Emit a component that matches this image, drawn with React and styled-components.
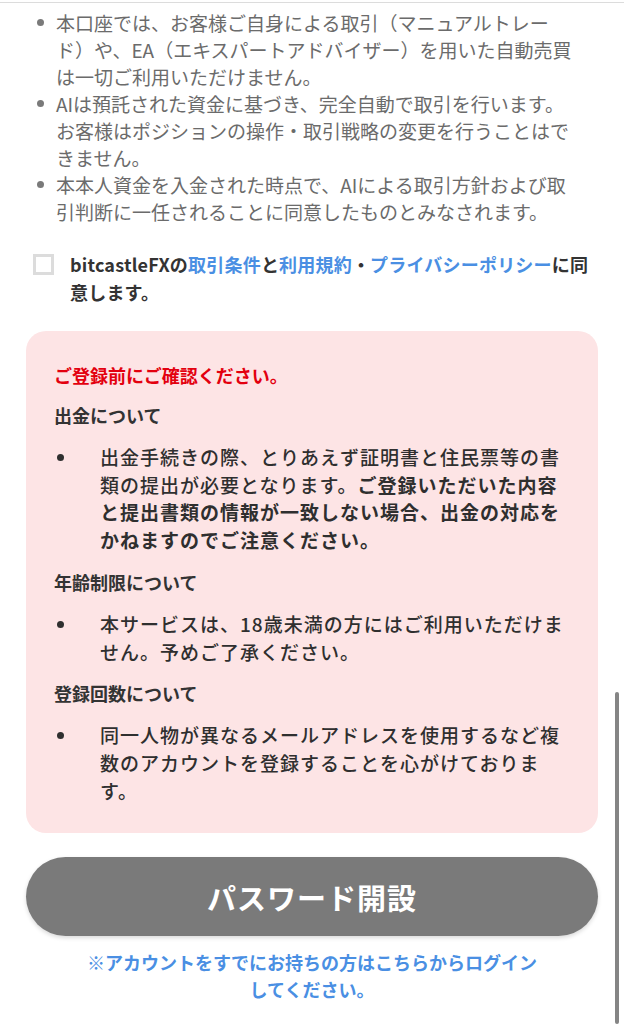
import React from "react";
import styled, { createGlobalStyle } from "styled-components";

const Global = createGlobalStyle`
  html, body { margin: 0; padding: 0; background: #fff; }
  body { font-family: "Noto Sans CJK JP", "Noto Sans", sans-serif; -webkit-font-smoothing: antialiased; }
  * { box-sizing: border-box; }
`;

const Page = styled.div`
  position: relative;
  width: 624px;
  height: 1022px;
  overflow: hidden;
  border-top: 1px solid #dcdcdc;
  margin-top: 2px;
`;

const Content = styled.div`
  padding: 0 26px;
  display: flex;
  flex-direction: column;
`;

const NoteList = styled.ul`
  list-style: none;
  margin: 6px 22px 0 0;
  padding: 0 0 0 30px;
  color: #6b6b6b;
  font-size: 19px;
  line-height: 27px;
`;

const NoteItem = styled.li`
  position: relative;
  &::before {
    content: "";
    position: absolute;
    left: -19px;
    top: 10px;
    width: 7px;
    height: 7px;
    border-radius: 50%;
    background: #7a7a7a;
  }
`;

const AgreeRow = styled.label`
  display: flex;
  gap: 16px;
  margin-top: 25px;
  padding-left: 7px;
  align-items: flex-start;
`;

const Check = styled.span`
  flex: none;
  width: 21px;
  height: 21px;
  margin-top: 4px;
  border: 3px solid #dcdcdc;
  background: #fff;
`;

const AgreeText = styled.span`
  font-size: 18px;
  line-height: 28px;
  letter-spacing: 0.2px;
  font-weight: 700;
  color: #333;
`;

const Link = styled.a`
  color: #4a8fe3;
  text-decoration: none;
`;

const Notice = styled.section`
  margin-top: 25px;
  background: #fde4e5;
  border-radius: 20px;
  padding: 30px 28px 29px;
  color: #2f2f2f;
`;

const NoticeTitle = styled.h2`
  margin: 0;
  font-size: 18px;
  line-height: 28px;
  font-weight: 700;
  color: #e3000f;
`;

const NoticeHeading = styled.h3`
  margin: 12px 0 0;
  font-size: 18px;
  line-height: 28px;
  font-weight: 700;
  color: #333;
`;

const NoticeList = styled.ul`
  list-style: none;
  margin: 14px 0 0;
  padding: 0 0 0 46px;
  font-size: 19px;
  line-height: 27.7px;
  letter-spacing: 1px;
  font-weight: 500;
  color: #2f2f2f;
  & + h3 { margin-top: 14px; }
`;

const NoticeItem = styled.li`
  position: relative;
  &::before {
    content: "";
    position: absolute;
    left: -43px;
    top: 11px;
    width: 7px;
    height: 7px;
    border-radius: 50%;
    background: #2f2f2f;
  }
`;

const Strong = styled.b`
  font-weight: 700;
`;

const SubmitButton = styled.button`
  margin-top: 24px;
  height: 79px;
  border: none;
  border-radius: 40px;
  background: #7a7a7a;
  color: #fff;
  font-family: inherit;
  font-size: 29px;
  font-weight: 700;
  letter-spacing: 1px;
  box-shadow: 0 2px 4px rgba(0, 0, 0, 0.15);
`;

const LoginNote = styled.p`
  margin: 13px 0 0;
  text-align: center;
  font-size: 18px;
  line-height: 27px;
  font-weight: 700;
  color: #4a8fe3;
  padding: 0 56px;
`;

const ScrollThumb = styled.div`
  position: absolute;
  right: 5px;
  top: 689px;
  width: 4px;
  bottom: 0;
  background: #858585;
  border-radius: 2px;
`;

export default function App() {
  return (
    <>
      <Global />
      <Page>
        <Content>
          <NoteList>
            <NoteItem>本口座では、お客様ご自身による取引（マニュアルトレード）や、EA（エキスパートアドバイザー）を用いた自動売買は一切ご利用いただけません。</NoteItem>
            <NoteItem>AIは預託された資金に基づき、完全自動で取引を行います。お客様はポジションの操作・取引戦略の変更を行うことはできません。</NoteItem>
            <NoteItem>本本人資金を入金された時点で、AIによる取引方針および取引判断に一任されることに同意したものとみなされます。</NoteItem>
          </NoteList>

          <AgreeRow>
            <Check />
            <AgreeText>
              bitcastleFXの<Link href="#">取引条件</Link>と<Link href="#">利用規約</Link>・<Link href="#">プライバシーポリシー</Link>に同意します。
            </AgreeText>
          </AgreeRow>

          <Notice>
            <NoticeTitle>ご登録前にご確認ください。</NoticeTitle>
            <NoticeHeading>出金について</NoticeHeading>
            <NoticeList>
              <NoticeItem>
                出金手続きの際、とりあえず証明書と住民票等の書類の提出が必要となります。<Strong>ご登録いただいた内容と提出書類の情報が一致しない場合、出金の対応をかねますのでご注意ください。</Strong>
              </NoticeItem>
            </NoticeList>
            <NoticeHeading>年齢制限について</NoticeHeading>
            <NoticeList>
              <NoticeItem>本サービスは、18歳未満の方にはご利用いただけません。予めご了承ください。</NoticeItem>
            </NoticeList>
            <NoticeHeading>登録回数について</NoticeHeading>
            <NoticeList>
              <NoticeItem>同一人物が異なるメールアドレスを使用するなど複数のアカウントを登録することを心がけております。</NoticeItem>
            </NoticeList>
          </Notice>

          <SubmitButton type="button">パスワード開設</SubmitButton>
          <LoginNote>※アカウントをすでにお持ちの方はこちらからログインしてください。</LoginNote>
        </Content>
        <ScrollThumb />
      </Page>
    </>
  );
}
